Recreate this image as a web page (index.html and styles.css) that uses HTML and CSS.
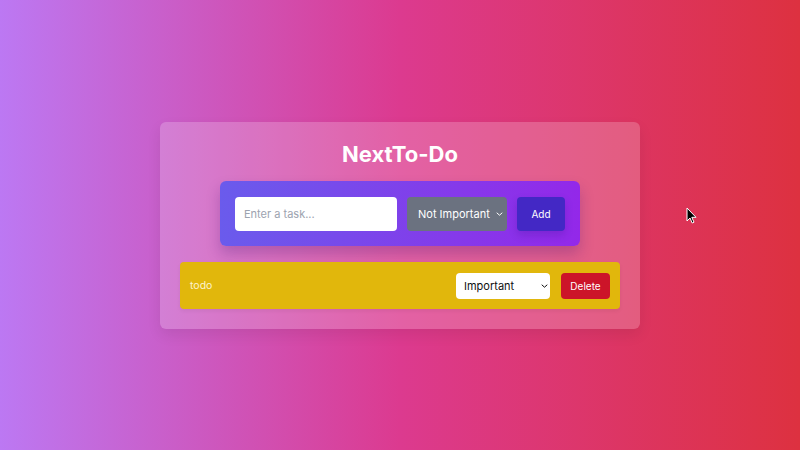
FILE: index.html
```html
<!DOCTYPE html>
<html>
<head>
<meta charset="utf-8">
<link rel="stylesheet" href="styles.css">
</head>
<body>
<main class="page">
  <section class="card">
    <h1 class="title">NextTo-Do</h1>
    <div class="panel">
      <div class="input">Enter a task...</div>
      <div class="select select-gray">
        <span>Not Important</span>
        <svg class="chev" width="7" height="6" viewBox="0 0 7 6"><path d="M1 2 L3.5 4.2 L6 2" fill="none" stroke="currentColor" stroke-width="1" stroke-linecap="round" stroke-linejoin="round"/></svg>
      </div>
      <div class="btn btn-add">Add</div>
    </div>
    <div class="row">
      <span class="todo-text">todo</span>
      <div class="row-actions">
        <div class="select select-white">
          <span>Important</span>
          <svg class="chev" width="7" height="6" viewBox="0 0 7 6"><path d="M1 2 L3.5 4.2 L6 2" fill="none" stroke="currentColor" stroke-width="1" stroke-linecap="round" stroke-linejoin="round"/></svg>
        </div>
        <div class="btn btn-delete">Delete</div>
      </div>
    </div>
  </section>
  <svg class="cursor" width="12" height="18" viewBox="0 0 12 18"><path d="M1 1 L1 14 L4 11 L6.2 16 L8 15.2 L5.8 10.3 L10 10.3 Z" fill="#000" stroke="#fff" stroke-width="1"/></svg>
</main>
</body>
</html>
```

FILE: styles.css
```css
* { box-sizing: border-box; }
html, body { margin: 0; padding: 0; }
body {
  width: 800px;
  height: 450px;
  font-family: Inter, "Noto Sans", sans-serif;
  background: linear-gradient(to right, #bc78f3 0%, #dc3a8f 50%, #dd3140 100%);
  overflow: hidden;
}
.page {
  position: relative;
  width: 800px;
  height: 450px;
  display: flex;
  justify-content: center;
  align-items: flex-start;
  padding-top: 122px;
}
.card {
  width: 480px;
  padding: 17px 20px 20px;
  background: rgba(255, 255, 255, 0.2);
  border-radius: 6px;
  box-shadow: 0 6px 14px rgba(0, 0, 0, 0.08);
  display: flex;
  flex-direction: column;
  align-items: center;
}
.title {
  margin: 0 0 12px;
  font-size: 22px;
  line-height: 30px;
  font-weight: 700;
  color: #fff;
}
.panel {
  width: 360px;
  height: 65px;
  padding: 0 15px;
  display: flex;
  align-items: center;
  gap: 10px;
  border-radius: 6px;
  background: linear-gradient(to right, #6a5bec, #9328e9);
  box-shadow: 0 8px 14px rgba(60, 20, 120, 0.25);
}
.input {
  width: 162px;
  height: 34px;
  background: #fff;
  border-radius: 4px;
  display: flex;
  align-items: center;
  padding-left: 9px;
  font-size: 11px;
  color: #9ca3af;
}
.select {
  display: flex;
  align-items: center;
  justify-content: space-between;
  border-radius: 4px;
  font-size: 11px;
}
.select-gray {
  width: 100px;
  height: 34px;
  background: #6b7280;
  color: #fff;
  padding: 0 4px 0 11px;
}
.select-white {
  width: 94px;
  height: 26px;
  background: #fff;
  color: #111;
  padding: 0 2px 0 8px;
}
.chev { flex: none; }
.btn {
  display: flex;
  align-items: center;
  justify-content: center;
  border-radius: 4px;
  color: #fff;
  font-size: 10px;
}
.btn-add {
  width: 48px;
  height: 34px;
  background: #4328c5;
  box-shadow: 0 4px 8px rgba(40, 10, 120, 0.2);
}
.row {
  align-self: stretch;
  margin-top: 16px;
  height: 47px;
  padding: 0 10px;
  background: #e1b70c;
  border-radius: 4px;
  display: flex;
  align-items: center;
  justify-content: space-between;
  box-shadow: 0 2px 4px rgba(0, 0, 0, 0.06);
}
.todo-text {
  color: #fdf3d0;
  font-size: 10.5px;
}
.row-actions {
  display: flex;
  align-items: center;
  gap: 11px;
}
.btn-delete {
  width: 49px;
  height: 26px;
  background: #cc1429;
}
.cursor {
  position: absolute;
  left: 686px;
  top: 207px;
}
```
